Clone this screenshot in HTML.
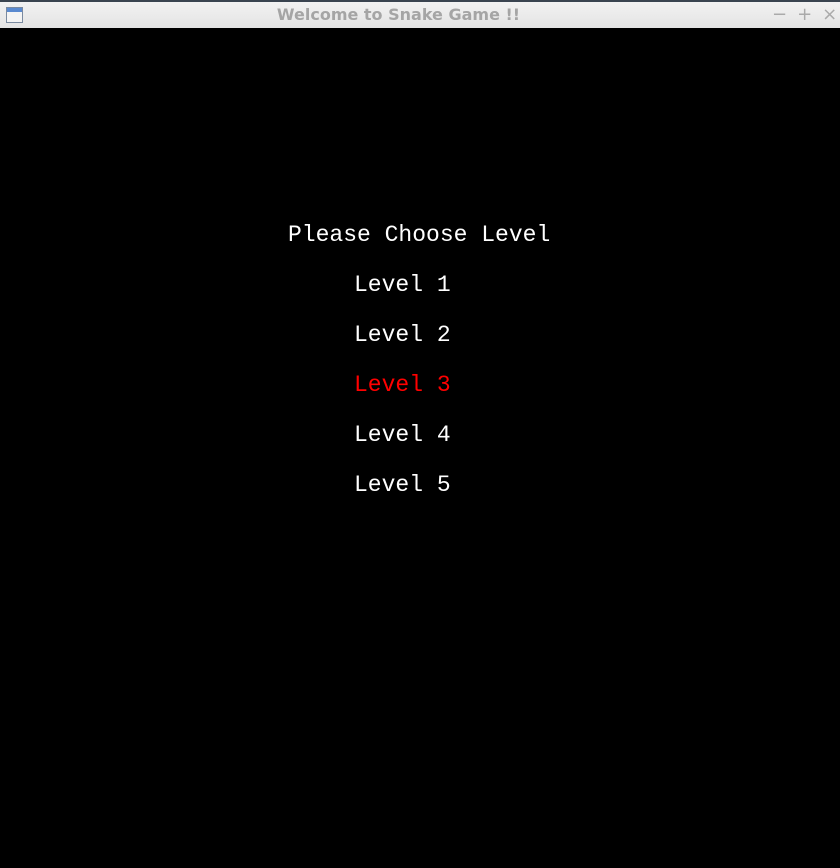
<!DOCTYPE html>
<html><head><style>
body{margin:0;width:840px;height:868px;background:#000;overflow:hidden;position:relative}
#tb{position:absolute;left:0;top:0;width:840px;height:28px;background:linear-gradient(#f2f2f2,#e4e4e4);border-top:2px solid #3a4450;box-sizing:border-box}
#tb .t{position:absolute;left:0;width:797px;text-align:center;top:3px;font:bold 16px "DejaVu Sans",sans-serif;color:#a5a5a5}
#ic{position:absolute;left:6px;top:5px;width:17px;height:16px;border:1px solid #7a8aa0;background:linear-gradient(#5a8ad0 0 4px,#f4f4f4 4px);box-sizing:border-box}
#ctl{position:absolute;left:772px;top:2px;font:18px "DejaVu Sans",sans-serif;color:#aaa;letter-spacing:10px;white-space:nowrap}
.l{position:absolute;font:23px "Liberation Mono",monospace;color:#fff;white-space:pre;line-height:23px}
</style></head><body>
<div id="tb"><div id="ic"></div><div class="t">Welcome to Snake Game !!</div><div id="ctl">−+×</div></div>
<div class="l" style="left:288px;top:224px">Please Choose Level</div>
<div class="l" style="left:354px;top:274px">Level 1</div>
<div class="l" style="left:354px;top:324px">Level 2</div>
<div class="l" style="left:354px;top:374px;color:#f00">Level 3</div>
<div class="l" style="left:354px;top:424px">Level 4</div>
<div class="l" style="left:354px;top:474px">Level 5</div>
</body></html>
